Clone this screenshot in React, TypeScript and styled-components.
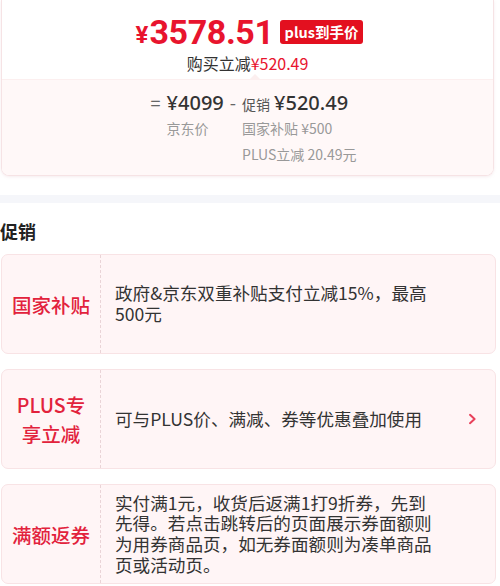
import React, {FC} from 'react';
import styled, {createGlobalStyle} from 'styled-components';

const GlobalStyle = createGlobalStyle`
    html, body {
        margin: 0;
        padding: 0;
        background: #fff;
    }
    body {
        font-family: "Noto Sans CJK SC", "Noto Sans", sans-serif;
        color: #333;
        width: 500px;
        overflow: hidden;
    }
`;

const Page = styled.div`
    display: flex;
    flex-direction: column;
    width: 500px;
`;

const PriceCard = styled.div`
    margin: 0 6px 0 1px;
    height: 176px;
    border: 1px solid #f6e3e5;
    border-top: none;
    border-radius: 0 0 8px 8px;
    box-shadow: 0 1px 3px rgba(230, 200, 205, 0.35);
    display: flex;
    flex-direction: column;
    overflow: hidden;
    box-sizing: border-box;
`;

const PriceTop = styled.div`
    height: 79px;
    display: flex;
    flex-direction: column;
    align-items: center;
    padding-top: 12px;
    box-sizing: border-box;
    background: #fff;
`;

const PriceRow = styled.div`
    display: flex;
    align-items: center;
    height: 40px;
    margin-left: 4px;
    color: #e8142e;
    font-family: Roboto, "Noto Sans", sans-serif;
    font-weight: 700;
`;

const Yen = styled.span`
    font-size: 24px;
    line-height: 28px;
    margin-top: 6px;
    margin-right: 1px;
`;

const BigPrice = styled.span`
    font-size: 34px;
    line-height: 40px;
    letter-spacing: -0.4px;
`;

const PlusBadge = styled.span`
    margin-left: 6px;
    height: 24px;
    padding: 0 5px;
    background: #e3101f;
    color: #fff;
    border-radius: 3px;
    font-size: 14.5px;
    font-weight: 700;
    line-height: 24px;
    font-family: "Noto Sans CJK SC", sans-serif;
`;

const SaveLine = styled.div`
    margin-top: 2px;
    font-size: 16px;
    line-height: 18px;
    color: #333;
`;

const Red = styled.span`
    color: #e8142e;
`;

const Breakdown = styled.div`
    flex: 1;
    position: relative;
    background: #fff8f8;
    border-top: 1px solid #fcefef;
    display: flex;
    justify-content: center;
    padding: 9px 0 0 12px;

    &::before {
        content: '';
        position: absolute;
        top: -6px;
        left: 247px;
        border: 6px solid transparent;
        border-top: none;
        border-bottom-color: #fcefef;
    }
`;

const Formula = styled.div`
    display: grid;
    grid-template-columns: auto auto auto auto;
    grid-auto-rows: 26px;
    column-gap: 6px;
    align-items: center;
`;

const Op = styled.span`
    font-size: 18px;
    color: #666;
`;

const Amount = styled.span`
    font-size: 20px;
    font-weight: 500;
    color: #333;
    font-family: "Noto Sans", "Noto Sans CJK SC", sans-serif;
`;

const Small = styled.span`
    font-size: 14px;
    color: #555;
    margin-right: 4px;
`;

const Note = styled.span`
    font-size: 14px;
    color: #999;
`;

const Band = styled.div`
    margin-top: 19px;
    height: 8px;
    background: #f5f6fa;
`;

const SectionTitle = styled.div`
    margin-top: 16px;
    font-size: 18px;
    font-weight: 700;
    line-height: 24px;
    color: #222;
`;

const PromoList = styled.div`
    margin: 11px 4px 0 1px;
    display: flex;
    flex-direction: column;
    gap: 15px;
`;

const PromoCard = styled.div`
    height: 100px;
    display: flex;
    border: 1px solid #f8e3e5;
    border-radius: 7px;
    background: #fff5f6;
    box-sizing: border-box;
    flex-shrink: 0;
`;

const PromoLabel = styled.div`
    width: 99px;
    flex-shrink: 0;
    border-right: 1px dashed #ead4d7;
    display: flex;
    align-items: center;
    justify-content: center;
    text-align: center;
    padding: 0 8px;
    box-sizing: border-box;
    font-size: 19.5px;
    line-height: 29px;
    font-weight: 500;
    color: #e2223c;
`;

const PromoText = styled.div`
    flex: 1;
    display: flex;
    align-items: center;
    padding: 0 54px 0 14px;
    font-size: 17.6px;
    line-height: 20.6px;
    color: #333;
`;

const Chevron = styled.div`
    width: 28px;
    flex-shrink: 0;
    display: flex;
    align-items: center;
    justify-content: flex-start;
    margin-left: -28px;
`;

interface Promo {
    label: string;
    text: string;
    more?: boolean;
}

const promos: Promo[] = [
    {label: '国家补贴', text: '政府&京东双重补贴支付立减15%，最高500元'},
    {label: 'PLUS专享立减', text: '可与PLUS价、满减、券等优惠叠加使用', more: true},
    {label: '满额返券', text: '实付满1元，收货后返满1打9折券，先到先得。若点击跳转后的页面展示券面额则为用券商品页，如无券面额则为凑单商品页或活动页。'},
];

const App: FC = () => {
    return (
        <Page>
            <GlobalStyle/>
            <PriceCard>
                <PriceTop>
                    <PriceRow>
                        <Yen>{'¥'}</Yen>
                        <BigPrice>{'3578.51'}</BigPrice>
                        <PlusBadge>{'plus到手价'}</PlusBadge>
                    </PriceRow>
                    <SaveLine>
                        {'购买立减'}
                        <Red>{'¥520.49'}</Red>
                    </SaveLine>
                </PriceTop>
                <Breakdown>
                    <Formula>
                        <Op>{'='}</Op>
                        <Amount>{'¥4099'}</Amount>
                        <Op>{'-'}</Op>
                        <span>
                            <Small>{'促销'}</Small>
                            <Amount>{'¥520.49'}</Amount>
                        </span>
                        <span/>
                        <Note>{'京东价'}</Note>
                        <span/>
                        <Note>{'国家补贴 ¥500'}</Note>
                        <span/>
                        <span/>
                        <span/>
                        <Note>{'PLUS立减 20.49元'}</Note>
                    </Formula>
                </Breakdown>
            </PriceCard>
            <Band/>
            <SectionTitle>{'促销'}</SectionTitle>
            <PromoList>
                {promos.map(p => (
                    <PromoCard key={p.label}>
                        <PromoLabel>{p.label}</PromoLabel>
                        <PromoText>{p.text}</PromoText>
                        {p.more && (
                            <Chevron>
                                <svg
                                    width='10'
                                    height='12'
                                    viewBox='0 0 10 12'
                                >
                                    <path
                                        d='M3 1.8 L7.6 6 L3 10.2'
                                        fill='none'
                                        stroke='#e8405a'
                                        strokeWidth='2'
                                        strokeLinecap='round'
                                        strokeLinejoin='round'
                                    />
                                </svg>
                            </Chevron>
                        )}
                    </PromoCard>
                ))}
            </PromoList>
        </Page>
    );
};

export default App;
